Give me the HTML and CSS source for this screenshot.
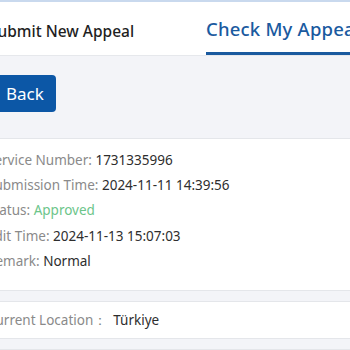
FILE: index.html
```html
<!DOCTYPE html>
<html>
<head>
<meta charset="utf-8">
<link rel="stylesheet" href="styles.css">
</head>
<body>
<div class="page">
  <div class="topbar"></div>
  <div class="tabs">
    <div class="tab">Submit New Appeal</div>
    <div class="tab active">Check My Appeal</div>
  </div>
  <div class="toolbar">
    <button class="back">Back</button>
  </div>
  <div class="card">
    <div class="row"><span class="label">Service Number: </span><span class="value">1731335996</span></div>
    <div class="row"><span class="label">Submission Time: </span><span class="value">2024-11-11 14:39:56</span></div>
    <div class="row"><span class="label">Status: </span><span class="value ok">Approved</span></div>
    <div class="row"><span class="label">Edit Time: </span><span class="value">2024-11-13 15:07:03</span></div>
    <div class="row"><span class="label">Remark: </span><span class="value">Normal</span></div>
  </div>
  <div class="gap"></div>
  <div class="loc"><span class="label">Current Location：</span><span class="value">Türkiye</span></div>
  <div class="gap"></div>
</div>
</body>
</html>
```
FILE: styles.css
```css
html, body { margin: 0; padding: 0; }
body { background: #f3f4f8; font-family: "Noto Sans", Inter, sans-serif; overflow: hidden; width: 350px; height: 350px; }
.page { margin-left: -13px; width: 420px; }
.topbar { height: 2px; background: #c9d9ee; }
.tabs { display: flex; background: #fff; height: 53px; border-bottom: 1px solid #e6e8ec; align-items: stretch; }
.tab { font-size: 15.5px; font-weight: 500; color: #1f1f1f; padding-left: 2px; width: 219px; display: flex; align-items: center; box-sizing: border-box; padding-top: 5px; }
.tab.active { font-size: 18.5px; color: #1a5a9f; border-bottom: 3px solid #1a5a9f; padding-left: 0; width: 200px; padding-top: 2px; letter-spacing: 0.2px; }
.toolbar { padding: 19px 0 26px 7px; border-bottom: 1px solid #e4e6ea; }
.back { font-family: inherit; font-size: 17px; color: #fff; background: #0c57a6; border: none; border-radius: 4px; height: 37px; padding: 0 12px; margin: 0; }
.card { background: #fff; padding: 9px 0 16px 0; border-bottom: 1px solid #e4e6ea; }
.row { font-size: 13.5px; line-height: 25.2px; }
.label { color: #8a8a8a; }
.value { color: #2e2e2e; }
.value.ok { color: #6cc58a; }
.gap { height: 10px; border-bottom: 1px solid #e4e6ea; }
.loc { background: #fff; font-size: 13.5px; line-height: 36px; border-bottom: 1px solid #e4e6ea; }
.loc .value { margin-left: 6px; }
```
